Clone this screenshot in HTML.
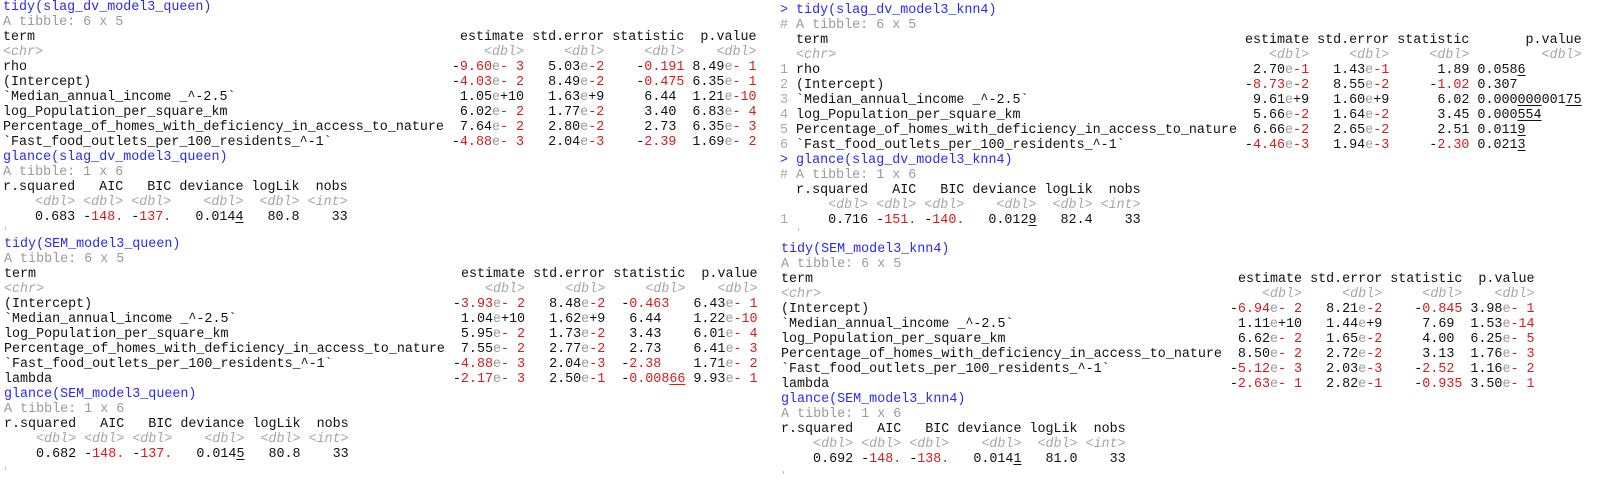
<!DOCTYPE html>
<html><head><meta charset="utf-8">
<style>
html,body{margin:0;padding:0;background:#fff;width:1605px;height:488px;overflow:hidden}
.p{position:absolute;font-family:"Liberation Mono",monospace;font-size:13.37px;line-height:15px;white-space:normal;color:#111}
.p div{height:15px;white-space:pre}
.p span{display:inline-block}
.t{width:55ch}
.c{width:10ch;text-align:right}
.e9{width:9ch;text-align:right}
.p9{width:9ch;text-align:right}
.p14{width:14ch;text-align:right}
.pl{width:13ch;padding-left:1ch;text-align:left}
.ln{width:2ch;color:#a8a8a8}
.ga{width:9ch;text-align:right}
.gb{width:6ch;text-align:right}
.gd{width:9ch;text-align:right}
.gl{width:7ch;text-align:right}
r{color:#d41c1c}
g{color:#9a9a9a}
.B{color:#2a2af0}
.A{color:#9a9a9a}
.I{color:#a6a6a6;font-style:italic}
u{text-decoration:underline;text-underline-offset:2px}
.tick{position:absolute;width:1px;height:3px;background:#bbb}
</style></head><body>

<div class="p" style="left:3px;top:0px">
<div class="B">tidy(slag_dv_model3_queen)</div>
<div class="A">A tibble: 6 x 5</div>
<div><span class="t">term</span><span class="c">estimate</span><span class="c">std.error</span><span class="c">statistic</span><span class="p9">p.value</span></div>
<div><span class="t I">&lt;chr&gt;</span><span class="c I">&lt;dbl&gt;</span><span class="c I">&lt;dbl&gt;</span><span class="c I">&lt;dbl&gt;</span><span class="p9 I">&lt;dbl&gt;</span></div>
<div><span class="t">rho</span><span class="c">-<r>9.60</r><g>e</g><r>- 3</r></span><span class="c">5.03<g>e</g><r>-2</r></span><span class="c">-<r>0.191</r></span><span class="p9">8.49<g>e</g><r>- 1</r></span></div>
<div><span class="t">(Intercept)</span><span class="c">-<r>4.03</r><g>e</g><r>- 2</r></span><span class="c">8.49<g>e</g><r>-2</r></span><span class="c">-<r>0.475</r></span><span class="p9">6.35<g>e</g><r>- 1</r></span></div>
<div><span class="t">`Median_annual_income _^-2.5`</span><span class="c">1.05<g>e</g>+10</span><span class="c">1.63<g>e</g>+9</span><span class="c">6.44 </span><span class="p9">1.21<g>e</g><r>-10</r></span></div>
<div><span class="t">log_Population_per_square_km</span><span class="c">6.02<g>e</g><r>- 2</r></span><span class="c">1.77<g>e</g><r>-2</r></span><span class="c">3.40 </span><span class="p9">6.83<g>e</g><r>- 4</r></span></div>
<div><span class="t">Percentage_of_homes_with_deficiency_in_access_to_nature</span><span class="c">7.64<g>e</g><r>- 2</r></span><span class="c">2.80<g>e</g><r>-2</r></span><span class="c">2.73 </span><span class="p9">6.35<g>e</g><r>- 3</r></span></div>
<div><span class="t">`Fast_food_outlets_per_100_residents_^-1`</span><span class="c">-<r>4.88</r><g>e</g><r>- 3</r></span><span class="c">2.04<g>e</g><r>-3</r></span><span class="c">-<r>2.39</r> </span><span class="p9">1.69<g>e</g><r>- 2</r></span></div>
<div class="B">glance(slag_dv_model3_queen)</div>
<div class="A">A tibble: 1 x 6</div>
<div><span class="ga">r.squared</span><span class="gb">AIC</span><span class="gb">BIC</span><span class="gd">deviance</span><span class="gl">logLik</span><span class="gb">nobs</span></div>
<div><span class="ga I">&lt;dbl&gt;</span><span class="gb I">&lt;dbl&gt;</span><span class="gb I">&lt;dbl&gt;</span><span class="gd I">&lt;dbl&gt;</span><span class="gl I">&lt;dbl&gt;</span><span class="gb I">&lt;int&gt;</span></div>
<div><span class="ga">0.683</span><span class="gb">-<r>148.</r></span><span class="gb">-<r>137.</r></span><span class="gd">0.014<u>4</u></span><span class="gl">80.8</span><span class="gb">33</span></div>
</div>
<div class="tick" style="left:5px;top:227px"></div>

<div class="p" style="left:4px;top:237px">
<div class="B">tidy(SEM_model3_queen)</div>
<div class="A">A tibble: 6 x 5</div>
<div><span class="t">term</span><span class="c">estimate</span><span class="c">std.error</span><span class="c">statistic</span><span class="p9">p.value</span></div>
<div><span class="t I">&lt;chr&gt;</span><span class="c I">&lt;dbl&gt;</span><span class="c I">&lt;dbl&gt;</span><span class="c I">&lt;dbl&gt;</span><span class="p9 I">&lt;dbl&gt;</span></div>
<div><span class="t">(Intercept)</span><span class="c">-<r>3.93</r><g>e</g><r>- 2</r></span><span class="c">8.48<g>e</g><r>-2</r></span><span class="c">-<r>0.463</r>  </span><span class="p9">6.43<g>e</g><r>- 1</r></span></div>
<div><span class="t">`Median_annual_income _^-2.5`</span><span class="c">1.04<g>e</g>+10</span><span class="c">1.62<g>e</g>+9</span><span class="c">6.44   </span><span class="p9">1.22<g>e</g><r>-10</r></span></div>
<div><span class="t">log_Population_per_square_km</span><span class="c">5.95<g>e</g><r>- 2</r></span><span class="c">1.73<g>e</g><r>-2</r></span><span class="c">3.43   </span><span class="p9">6.01<g>e</g><r>- 4</r></span></div>
<div><span class="t">Percentage_of_homes_with_deficiency_in_access_to_nature</span><span class="c">7.55<g>e</g><r>- 2</r></span><span class="c">2.77<g>e</g><r>-2</r></span><span class="c">2.73   </span><span class="p9">6.41<g>e</g><r>- 3</r></span></div>
<div><span class="t">`Fast_food_outlets_per_100_residents_^-1`</span><span class="c">-<r>4.88</r><g>e</g><r>- 3</r></span><span class="c">2.04<g>e</g><r>-3</r></span><span class="c">-<r>2.38</r>   </span><span class="p9">1.71<g>e</g><r>- 2</r></span></div>
<div><span class="t">lambda</span><span class="c">-<r>2.17</r><g>e</g><r>- 3</r></span><span class="c">2.50<g>e</g><r>-1</r></span><span class="c">-<r>0.008<u>66</u></r></span><span class="p9">9.93<g>e</g><r>- 1</r></span></div>
<div class="B">glance(SEM_model3_queen)</div>
<div class="A">A tibble: 1 x 6</div>
<div><span class="ga">r.squared</span><span class="gb">AIC</span><span class="gb">BIC</span><span class="gd">deviance</span><span class="gl">logLik</span><span class="gb">nobs</span></div>
<div><span class="ga I">&lt;dbl&gt;</span><span class="gb I">&lt;dbl&gt;</span><span class="gb I">&lt;dbl&gt;</span><span class="gd I">&lt;dbl&gt;</span><span class="gl I">&lt;dbl&gt;</span><span class="gb I">&lt;int&gt;</span></div>
<div><span class="ga">0.682</span><span class="gb">-<r>148.</r></span><span class="gb">-<r>137.</r></span><span class="gd">0.014<u>5</u></span><span class="gl">80.8</span><span class="gb">33</span></div>
</div>
<div class="tick" style="left:5px;top:467px"></div>

<div class="p" style="left:780px;top:2.5px">
<div><span class="ln" style="color:#2a2af0">&gt;</span><span class="B">tidy(slag_dv_model3_knn4)</span></div>
<div><span class="ln">#</span><span class="A">A tibble: 6 x 5</span></div>
<div><span class="ln"></span><span class="t">term</span><span class="e9">estimate</span><span class="c">std.error</span><span class="c">statistic</span><span class="p14">p.value</span></div>
<div><span class="ln"></span><span class="t I">&lt;chr&gt;</span><span class="e9 I">&lt;dbl&gt;</span><span class="c I">&lt;dbl&gt;</span><span class="c I">&lt;dbl&gt;</span><span class="p14 I">&lt;dbl&gt;</span></div>
<div><span class="ln">1</span><span class="t">rho</span><span class="e9">2.70<g>e</g><r>-1</r></span><span class="c">1.43<g>e</g><r>-1</r></span><span class="c">1.89</span><span class="pl">0.058<u>6</u></span></div>
<div><span class="ln">2</span><span class="t">(Intercept)</span><span class="e9">-<r>8.73</r><g>e</g><r>-2</r></span><span class="c">8.55<g>e</g><r>-2</r></span><span class="c">-<r>1.02</r></span><span class="pl">0.307</span></div>
<div><span class="ln">3</span><span class="t">`Median_annual_income _^-2.5`</span><span class="e9">9.61<g>e</g>+9</span><span class="c">1.60<g>e</g>+9</span><span class="c">6.02</span><span class="pl">0.000<u>000</u>001<u>75</u></span></div>
<div><span class="ln">4</span><span class="t">log_Population_per_square_km</span><span class="e9">5.66<g>e</g><r>-2</r></span><span class="c">1.64<g>e</g><r>-2</r></span><span class="c">3.45</span><span class="pl">0.000<u>554</u></span></div>
<div><span class="ln">5</span><span class="t">Percentage_of_homes_with_deficiency_in_access_to_nature</span><span class="e9">6.66<g>e</g><r>-2</r></span><span class="c">2.65<g>e</g><r>-2</r></span><span class="c">2.51</span><span class="pl">0.011<u>9</u></span></div>
<div><span class="ln">6</span><span class="t">`Fast_food_outlets_per_100_residents_^-1`</span><span class="e9">-<r>4.46</r><g>e</g><r>-3</r></span><span class="c">1.94<g>e</g><r>-3</r></span><span class="c">-<r>2.30</r></span><span class="pl">0.021<u>3</u></span></div>
<div><span class="ln" style="color:#2a2af0">&gt;</span><span class="B">glance(slag_dv_model3_knn4)</span></div>
<div><span class="ln">#</span><span class="A">A tibble: 1 x 6</span></div>
<div><span class="ln"></span><span class="ga">r.squared</span><span class="gb">AIC</span><span class="gb">BIC</span><span class="gd">deviance</span><span class="gl">logLik</span><span class="gb">nobs</span></div>
<div><span class="ln"></span><span class="ga I">&lt;dbl&gt;</span><span class="gb I">&lt;dbl&gt;</span><span class="gb I">&lt;dbl&gt;</span><span class="gd I">&lt;dbl&gt;</span><span class="gl I">&lt;dbl&gt;</span><span class="gb I">&lt;int&gt;</span></div>
<div><span class="ln">1</span><span class="ga">0.716</span><span class="gb">-<r>151.</r></span><span class="gb">-<r>140.</r></span><span class="gd">0.012<u>9</u></span><span class="gl">82.4</span><span class="gb">33</span></div>
</div>
<div class="tick" style="left:798px;top:228px"></div>

<div class="p" style="left:781px;top:241.5px">
<div class="B">tidy(SEM_model3_knn4)</div>
<div class="A">A tibble: 6 x 5</div>
<div><span class="t">term</span><span class="c">estimate</span><span class="c">std.error</span><span class="c">statistic</span><span class="p9">p.value</span></div>
<div><span class="t I">&lt;chr&gt;</span><span class="c I">&lt;dbl&gt;</span><span class="c I">&lt;dbl&gt;</span><span class="c I">&lt;dbl&gt;</span><span class="p9 I">&lt;dbl&gt;</span></div>
<div><span class="t">(Intercept)</span><span class="c">-<r>6.94</r><g>e</g><r>- 2</r></span><span class="c">8.21<g>e</g><r>-2</r></span><span class="c">-<r>0.845</r></span><span class="p9">3.98<g>e</g><r>- 1</r></span></div>
<div><span class="t">`Median_annual_income _^-2.5`</span><span class="c">1.11<g>e</g>+10</span><span class="c">1.44<g>e</g>+9</span><span class="c">7.69 </span><span class="p9">1.53<g>e</g><r>-14</r></span></div>
<div><span class="t">log_Population_per_square_km</span><span class="c">6.62<g>e</g><r>- 2</r></span><span class="c">1.65<g>e</g><r>-2</r></span><span class="c">4.00 </span><span class="p9">6.25<g>e</g><r>- 5</r></span></div>
<div><span class="t">Percentage_of_homes_with_deficiency_in_access_to_nature</span><span class="c">8.50<g>e</g><r>- 2</r></span><span class="c">2.72<g>e</g><r>-2</r></span><span class="c">3.13 </span><span class="p9">1.76<g>e</g><r>- 3</r></span></div>
<div><span class="t">`Fast_food_outlets_per_100_residents_^-1`</span><span class="c">-<r>5.12</r><g>e</g><r>- 3</r></span><span class="c">2.03<g>e</g><r>-3</r></span><span class="c">-<r>2.52</r> </span><span class="p9">1.16<g>e</g><r>- 2</r></span></div>
<div><span class="t">lambda</span><span class="c">-<r>2.63</r><g>e</g><r>- 1</r></span><span class="c">2.82<g>e</g><r>-1</r></span><span class="c">-<r>0.935</r></span><span class="p9">3.50<g>e</g><r>- 1</r></span></div>
<div class="B">glance(SEM_model3_knn4)</div>
<div class="A">A tibble: 1 x 6</div>
<div><span class="ga">r.squared</span><span class="gb">AIC</span><span class="gb">BIC</span><span class="gd">deviance</span><span class="gl">logLik</span><span class="gb">nobs</span></div>
<div><span class="ga I">&lt;dbl&gt;</span><span class="gb I">&lt;dbl&gt;</span><span class="gb I">&lt;dbl&gt;</span><span class="gd I">&lt;dbl&gt;</span><span class="gl I">&lt;dbl&gt;</span><span class="gb I">&lt;int&gt;</span></div>
<div><span class="ga">0.692</span><span class="gb">-<r>148.</r></span><span class="gb">-<r>138.</r></span><span class="gd">0.014<u>1</u></span><span class="gl">81.0</span><span class="gb">33</span></div>
</div>
<div class="tick" style="left:783px;top:471px"></div>

</body></html>
